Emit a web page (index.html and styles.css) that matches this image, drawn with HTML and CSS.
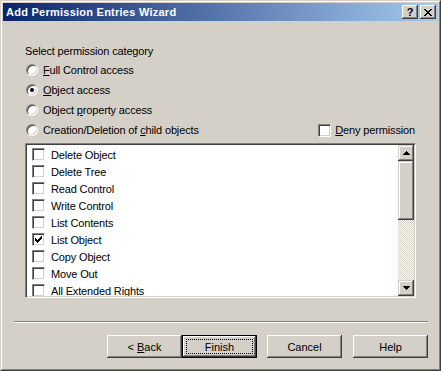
FILE: index.html
```html
<!DOCTYPE html>
<html lang="en">

<head>
    <meta charset="UTF-8">
    <title>Add Permission Entries Wizard</title>
    <link rel="stylesheet" href="styles.css">
</head>

<body>
    <div class="window">
        <div class="frame">
            <!-- Title Bar -->
            <div class="titlebar">
                <span class="title">Add Permission Entries Wizard</span>
                <div class="caption-buttons">
                    <span class="cap-btn help-btn">?</span>
                    <span class="cap-btn close-btn">
                        <svg width="8" height="7" viewBox="0 0 8 7" shape-rendering="crispEdges">
                            <path d="M0 0h2v1H0z M6 0h2v1H6z M1 1h2v1H1z M5 1h2v1H5z M2 2h4v1H2z M3 3h2v1H3z M2 4h4v1H2z M1 5h2v1H1z M5 5h2v1H5z M0 6h2v1H0z M6 6h2v1H6z" fill="#000"/>
                        </svg>
                    </span>
                </div>
            </div>

            <!-- Dialog Body -->
            <div class="content">
                <div class="section-label">Select permission category</div>
                <div class="option"><span class="radio"></span><span><u>F</u>ull Control access</span></div>
                <div class="option"><span class="radio checked"></span><span><u>O</u>bject access</span></div>
                <div class="option"><span class="radio"></span><span>Object <u>p</u>roperty access</span></div>
                <div class="option-row">
                    <div class="option"><span class="radio"></span><span>Creation/Deletion of <u>c</u>hild objects</span></div>
                    <div class="deny-option"><span class="checkbox"></span><span><u>D</u>eny permission</span></div>
                </div>

                <div class="listbox">
                    <div class="list-items">
                        <div class="list-item"><span class="checkbox"></span>Delete Object</div>
                        <div class="list-item"><span class="checkbox"></span>Delete Tree</div>
                        <div class="list-item"><span class="checkbox"></span>Read Control</div>
                        <div class="list-item"><span class="checkbox"></span>Write Control</div>
                        <div class="list-item"><span class="checkbox"></span>List Contents</div>
                        <div class="list-item">
                            <span class="checkbox">
                                <svg width="7" height="7" viewBox="0 0 7 7" shape-rendering="crispEdges">
                                    <path d="M6 0h1v1H6z M5 1h2v1H5z M0 2h1v1H0z M4 2h3v1H4z M0 3h2v1H0z M3 3h3v1H3z M0 4h5v1H0z M1 5h3v1H1z M2 6h1v1H2z" fill="#000"/>
                                </svg>
                            </span>List Object
                        </div>
                        <div class="list-item"><span class="checkbox"></span>Copy Object</div>
                        <div class="list-item"><span class="checkbox"></span>Move Out</div>
                        <div class="list-item"><span class="checkbox"></span>All Extended Rights</div>
                    </div>
                    <!-- Scrollbar -->
                    <div class="scrollbar">
                        <div class="scroll-btn">
                            <svg width="7" height="4" viewBox="0 0 7 4" shape-rendering="crispEdges">
                                <path d="M3 0h1v1H3z M2 1h3v1H2z M1 2h5v1H1z M0 3h7v1H0z" fill="#000"/>
                            </svg>
                        </div>
                        <div class="scroll-thumb"></div>
                        <div class="scroll-track"></div>
                        <div class="scroll-btn">
                            <svg width="7" height="4" viewBox="0 0 7 4" shape-rendering="crispEdges">
                                <path d="M0 0h7v1H0z M1 1h5v1H1z M2 2h3v1H2z M3 3h1v1H3z" fill="#000"/>
                            </svg>
                        </div>
                    </div>
                </div>
            </div>

            <!-- Wizard Buttons -->
            <div class="footer">
                <div class="separator"></div>
                <div class="buttons">
                    <button class="btn">&lt; <u>B</u>ack</button>
                    <button class="btn default"><span class="focus">Finish</span></button>
                    <button class="btn cancel">Cancel</button>
                    <button class="btn help">Help</button>
                </div>
            </div>
        </div>
    </div>
</body>

</html>
```

FILE: styles.css
```css
body {
    margin: 0;
    padding: 0;
    font-family: 'Liberation Sans', Arial, sans-serif;
    font-size: 11px;
    color: #000;
    background-color: #d4d0c8;
}

/* Window frame */
.window {
    width: 441px;
    height: 371px;
    box-sizing: border-box;
    border: 1px solid;
    border-color: #d4d0c8 #404040 #404040 #d4d0c8;
    background-color: #d4d0c8;
}

.frame {
    height: 100%;
    box-sizing: border-box;
    border: 1px solid;
    border-color: #fff #808080 #808080 #fff;
    padding: 1px;
    display: flex;
    flex-direction: column;
}

/* Title bar */
.titlebar {
    height: 18px;
    background: linear-gradient(to right, #0a246a, #a6caf0);
    display: flex;
    align-items: center;
    justify-content: space-between;
    padding: 0 2px 0 3px;
}

.title {
    color: #fff;
    font-weight: bold;
    font-size: 11px;
    letter-spacing: 0.25px;
}

.caption-buttons {
    display: flex;
    gap: 2px;
}

.cap-btn {
    width: 16px;
    height: 14px;
    box-sizing: border-box;
    background-color: #d4d0c8;
    box-shadow: inset -1px -1px #404040, inset 1px 1px #fff, inset -2px -2px #808080;
    display: flex;
    align-items: center;
    justify-content: center;
}

.help-btn {
    font-weight: bold;
    font-size: 11px;
    line-height: 14px;
}

.close-btn svg {
    display: block;
}

/* Body */
.content {
    padding: 24px 22px 0 22px;
    letter-spacing: -0.15px;
}

.section-label {
    line-height: 13px;
    height: 13px;
    margin-bottom: 2px;
}

.option {
    display: flex;
    align-items: center;
    height: 20px;
    margin-left: 1px;
}

.option-row {
    display: flex;
    align-items: center;
    justify-content: space-between;
}

.radio {
    width: 12px;
    height: 12px;
    box-sizing: border-box;
    border-radius: 50%;
    border: 1px solid;
    border-color: #808080 #fff #fff #808080;
    background-color: #fff;
    box-shadow: inset 1px 1px 0 #404040, inset -1px -1px 0 #d4d0c8;
    margin-right: 5px;
    position: relative;
}

.radio.checked::after {
    content: "";
    position: absolute;
    left: 3px;
    top: 3px;
    width: 4px;
    height: 4px;
    border-radius: 50%;
    background-color: #000;
}

.deny-option {
    display: flex;
    align-items: center;
    margin-right: 1px;
}

.checkbox {
    width: 13px;
    height: 13px;
    box-sizing: border-box;
    border: 1px solid;
    border-color: #808080 #fff #fff #808080;
    background-color: #fff;
    box-shadow: inset 1px 1px 0 #404040, inset -1px -1px 0 #d4d0c8;
    display: flex;
    align-items: center;
    justify-content: center;
    flex-shrink: 0;
}

.deny-option .checkbox {
    margin-right: 4px;
}

/* List box */
.listbox {
    margin-top: 3px;
    height: 155px;
    box-sizing: border-box;
    border: 1px solid;
    border-color: #808080 #fff #fff #808080;
    box-shadow: inset 1px 1px 0 #404040, inset -1px -1px 0 #d4d0c8;
    padding: 1px;
    background-color: #fff;
    display: flex;
}

.list-items {
    flex: 1;
    overflow: hidden;
    padding-top: 1px;
}

.list-item {
    display: flex;
    align-items: center;
    height: 17px;
    padding-left: 5px;
}

.list-item .checkbox {
    margin-right: 6px;
}

.scrollbar {
    width: 16px;
    display: flex;
    flex-direction: column;
}

.scroll-btn,
.scroll-thumb {
    background-color: #d4d0c8;
    box-shadow: inset -1px -1px #404040, inset 1px 1px #d4d0c8, inset -2px -2px #808080, inset 2px 2px #fff;
}

.scroll-btn {
    height: 16px;
    display: flex;
    align-items: center;
    justify-content: center;
}

.scroll-thumb {
    height: 59px;
}

.scroll-track {
    flex: 1;
    background: repeating-conic-gradient(#fff 0 25%, #d4d0c8 0 50%) 0 0 / 2px 2px;
}

/* Footer */
.footer {
    padding: 0 10px 0 11px;
}

.separator {
    margin-top: 23px;
    border-top: 1px solid #808080;
    border-bottom: 1px solid #fff;
    height: 0;
}

.buttons {
    margin-top: 12px;
    display: flex;
    justify-content: flex-end;
}

.btn {
    width: 75px;
    height: 23px;
    box-sizing: border-box;
    border: none;
    padding: 0;
    background-color: #d4d0c8;
    font-family: inherit;
    font-size: 11px;
    color: #000;
    box-shadow: inset -1px -1px #404040, inset 1px 1px #fff, inset -2px -2px #808080, inset 2px 2px #d4d0c8;
}

.btn.default {
    border: 1px solid #000;
    box-shadow: inset -1px -1px #404040, inset 1px 1px #fff, inset -2px -2px #808080;
    position: relative;
}

.btn .focus {
    position: absolute;
    left: 3px;
    top: 3px;
    right: 3px;
    bottom: 3px;
    border: 1px dotted #000;
    display: flex;
    align-items: center;
    justify-content: center;
}

.btn.cancel {
    margin-left: 10px;
}

.btn.help {
    margin-left: 11px;
}
```
